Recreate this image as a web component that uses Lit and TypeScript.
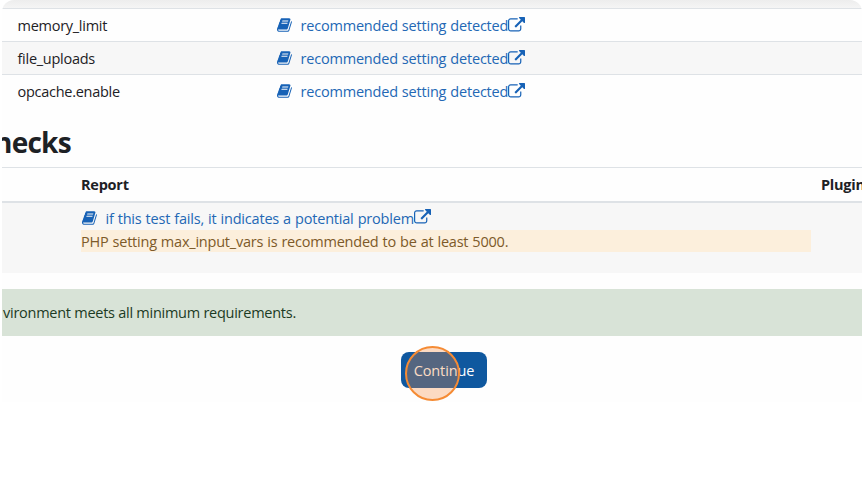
import { LitElement, html, css, svg } from "lit";
import { customElement } from "lit/decorators.js";

const book = svg`<path d="M1639 478q40 57 18 129l-275 906q-19 64-76.500 107.500t-122.500 43.500h-923q-77 0-148.500-53.500t-99.500-131.500q-24-67-2-127 0-4 3-27t4-37q1-8-3-21.500t-3-19.500q2-11 8-21t16.500-23.500 16.500-23.500q23-38 45-91.500t30-91.500q3-10 .5-30t-.5-28q3-11 17-28t17-23q21-36 42-92t25-90q1-9-2.500-32t.5-28q4-13 22-30.500t22-22.500q19-26 42.500-84.500t27.500-96.500q1-8-3-25.500t-2-26.500q2-8 9-18t18-23 17-21q8-12 16.500-30.500t15-35 16-36 19.500-32 26.500-23.500 36-11.500 47.500 5.500l-1 3q38-9 51-9h761q74 0 114 56t18 130l-274 906q-36 119-71.500 153.500t-128.500 34.500h-869q-27 0-38 15-11 16-1 43 24 70 144 70h923q29 0 56-15.500t35-41.500l300-987q7-22 5-57 38 15 59 43zm-1064 2q-4 13 2 22.500t20 9.500h608q13 0 25.500-9.500t16.500-22.500l21-64q4-13-2-22.500t-20-9.500h-608q-13 0-25.500 9.500t-16.500 22.500zm-83 256q-4 13 2 22.500t20 9.500h608q13 0 25.500-9.500t16.500-22.500l21-64q4-13-2-22.500t-20-9.500h-608q-13 0-25.500 9.500t-16.500 22.500z"/>`;
const external = svg`<path d="M1408 928v320q0 119-84.500 203.500t-203.500 84.500h-832q-119 0-203.500-84.500t-84.500-203.500v-832q0-119 84.500-203.500t203.500-84.500h704q14 0 23 9t9 23v64q0 14-9 23t-23 9h-704q-66 0-113 47t-47 113v832q0 66 47 113t113 47h832q66 0 113-47t47-113v-320q0-14 9-23t23-9h64q14 0 23 9t9 23zm384-864v512q0 26-19 45t-45 19-45-19l-176-176-652 652q-10 10-23 10t-23-10l-114-114q-10-10-10-23t10-23l652-652-176-176q-19-19-19-45t19-45 45-19h512q26 0 45 19t19 45z"/>`;

@customElement("app-root")
export class AppRoot extends LitElement {
  static styles = css`
    :host { display: block; width: 865px; height: 480px; overflow: hidden; background: #fff;
      font-family: "Open Sans", "Noto Sans", sans-serif; font-size: 14.5px; color: #1d2125; }
    * { box-sizing: border-box; }
    .card { width: 860px; height: 402px; margin-left: 2px; overflow: hidden; border-radius: 12px 12px 0 0;
      display: flex; flex-direction: column; white-space: nowrap; background: #fefefe; }
    .strip { height: 8px; flex: none; background: linear-gradient(#ededed, #f5f5f5); }
    .row { height: 33px; flex: none; display: grid; grid-template-columns: 259px 1fr; align-items: center;
      border-top: 1px solid #dee2e6; padding: 1px 0 0 15.500px; }
    .row.odd { background: #f7f7f7; }
    .name { letter-spacing: -0.27px; }
    .link { display: flex; align-items: center; color: #2368b5; }
    .link span { margin-left: 8px; letter-spacing: -0.2px; word-spacing: 0.5px; }
    svg { width: 16px; height: 16px; fill: #1762b6; flex: none; margin-top: -1px; }
    svg.ext { width: 17px; height: 17px; margin-top: -1px; }
    h2 { margin: 0 0 0 -8px; height: 60px; flex: none; font-size: 28px; font-weight: 700; line-height: 36px; padding-top: 17px;
      letter-spacing: -0.75px; }
    .head { height: 34px; flex: none; border-top: 1px solid #dee2e6; font-weight: 700; display: grid;
      grid-template-columns: 740px 1fr; align-items: center; padding: 0 0 0 79px; letter-spacing: -0.25px; }
    .report { height: 72px; flex: none; border-top: 2px solid #dee2e6; background: #f7f7f7; padding: 5px 51px 0 79px; }
    .report .link { height: 22px; margin: -1px 0 1px; }
    .report .link svg:first-child { margin-left: 1px; margin-top: 0; }
    .report .link span { margin-left: 7.500px; }
    .warn { height: 22px; line-height: 23px; background: #fcefdc; color: #7d5a29; letter-spacing: -0.22px; word-spacing: 0.5px; }
    .alert { height: 47px; flex: none; margin-top: 16px; padding-left: 1px; line-height: 47px; background: #d8e3d7; color: #1c3b24;
      letter-spacing: -0.26px; }
    .actions { display: flex; padding: 16px 0 0 399px; }
    .btn { position: relative; width: 86px; height: 36px; border: 0; border-radius: 8px; background: #0f589f;
      color: #fff; font: inherit; padding: 0; letter-spacing: -0.1px; }
    .ring { position: absolute; left: 4px; top: -6px; width: 55px; height: 55px; border-radius: 50%;
      border: 2px solid #f58b34; background: rgba(249, 137, 55, 0.3); }
  `;

  private link(text: string) {
    return html`<div class="link"><svg viewBox="0 0 1792 1792">${book}</svg><span>${text}</span><svg class="ext" viewBox="0 0 1792 1792">${external}</svg></div>`;
  }

  render() {
    return html`<div class="card">
      <div class="strip"></div>
      ${["memory_limit", "file_uploads", "opcache.enable"].map(
        (n, i) => html`<div class="row ${i === 1 ? "odd" : ""}"><div class="name">${n}</div>${this.link("recommended setting detected")}</div>`
      )}
      <h2>hecks</h2>
      <div class="head"><div>Report</div><div>Plugin</div></div>
      <div class="report">
        ${this.link("if this test fails, it indicates a potential problem")}
        <div class="warn">PHP setting max_input_vars is recommended to be at least 5000.</div>
      </div>
      <div class="alert">vironment meets all minimum requirements.</div>
      <div class="actions"><button class="btn">Continue<span class="ring"></span></button></div>
    </div>`;
  }
}
